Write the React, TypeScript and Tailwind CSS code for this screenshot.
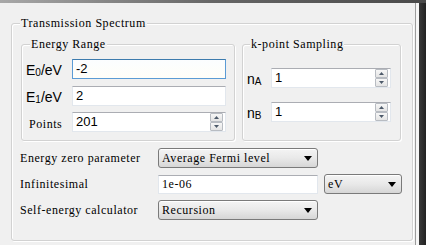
import React from "react";

const mono = "font-['Liberation_Serif',serif] text-[12px] tracking-[0.55px] text-black";
const sans = "font-['Liberation_Sans',Arial,sans-serif] text-black";

function GroupBox({ title, titleLeft, className, children }: { title: string; titleLeft: string; className: string; children?: React.ReactNode }) {
  return (
    <div className={"relative rounded-[3px] border border-[#d2d2d2] shadow-[inset_1px_1px_0_#ffffff,1px_1px_0_#ffffff] " + className}>
      <span className={"absolute top-[-8px] bg-[#f0f0f0] px-[1px] leading-[14px] whitespace-nowrap " + mono + " " + titleLeft}>{title}</span>
      {children}
    </div>
  );
}

function Tri({ up, color = "#4d5a6a" }: { up?: boolean; color?: string }) {
  return (
    <svg width="5" height="3" viewBox="0 0 5 3" className="block">
      {up ? <path d="M0 3 L2.5 0 L5 3 Z" fill={color} /> : <path d="M0 0 L5 0 L2.5 3 Z" fill={color} />}
    </svg>
  );
}

function Spinner() {
  return (
    <div className="flex flex-col w-[13px] h-[18px] mr-[2px]">
      <div className="flex-1 flex items-center justify-center border border-[#b8bcc2] rounded-[1px] bg-gradient-to-b from-[#f7f7f7] to-[#e4e4e4]">
        <Tri up />
      </div>
      <div className="flex-1 flex items-center justify-center border border-[#b8bcc2] rounded-[1px] bg-gradient-to-b from-[#f7f7f7] to-[#e4e4e4]">
        <Tri />
      </div>
    </div>
  );
}

function TextBox({ value, w, focused, spin, monoText, h = "h-[20px]" }: { value: string; w: string; focused?: boolean; spin?: boolean; monoText?: boolean; h?: string }) {
  const border = focused
    ? "border border-[#5b9bd5] border-t-[#3d7bad]"
    : "border border-[#e2e7ed] border-t-[#abadb3]";
  return (
    <div className={"flex items-center bg-white " + border + " " + w + " " + h + (focused ? " bg-gradient-to-b from-[#fbfdff] to-[#fffef8]" : "")}>
      <span className={"flex-1 pl-[3px] leading-[14px] " + (monoText ? mono : sans + " text-[13px]")}>{value}</span>
      {spin && <Spinner />}
    </div>
  );
}

function Combo({ value, w }: { value: string; w: string }) {
  return (
    <div className={"flex items-center h-[20px] rounded-[3px] border border-[#7a7a7a] bg-gradient-to-b from-[#f4f4f4] via-[#e9e9e9] to-[#d6d6d6] shadow-[inset_0_1px_0_#ffffff] " + w}>
      <span className={"flex-1 pl-[3px] leading-[14px] whitespace-nowrap " + mono}>{value}</span>
      <svg width="8" height="5" viewBox="0 0 8 5" className="mr-[5px]">
        <path d="M0 0 L8 0 L4 5 Z" fill="#000" />
      </svg>
    </div>
  );
}

function SubLabel({ main, sub, rest }: { main: string; sub: string; rest?: string }) {
  return (
    <span className={sans + " text-[14px] leading-[16px] whitespace-nowrap"}>
      {main}
      <sub className="text-[10px] relative top-[1px] align-baseline">{sub}</sub>
      {rest}
    </span>
  );
}

export default function App() {
  return (
    <div className="w-[426px] h-[245px] bg-[#f0f0f0] flex flex-col overflow-hidden">
      <div className="h-[3px] bg-gradient-to-r from-[#a8a8a8] via-[#666666] to-[#4a4a4a]" />
      <div className="flex flex-1">
        <div className="w-[415px]">
          <GroupBox title="Transmission Spectrum" titleLeft="left-[8px]" className="ml-[11px] mt-[20px] w-[402px] h-[218px]">
            <div className="flex mt-[20px] ml-[9px] gap-[7px]">
              <GroupBox title="Energy Range" titleLeft="left-[8px]" className="w-[214px] h-[97px]">
                <div className="flex flex-col pl-[4px]">
                  <div className="flex items-center h-[20px] mt-[14px]">
                    <div className="w-[46px]"><SubLabel main="E" sub="0" rest="/eV" /></div>
                    <TextBox value="-2" w="w-[154px]" focused />
                  </div>
                  <div className="flex items-center h-[20px] mt-[7px]">
                    <div className="w-[46px]"><SubLabel main="E" sub="1" rest="/eV" /></div>
                    <TextBox value="2" w="w-[154px]" />
                  </div>
                  <div className="flex items-center h-[20px] mt-[6px]">
                    <div className="w-[46px]"><span className={mono + " leading-[14px] pl-[3px]"}>Points</span></div>
                    <TextBox value="201" w="w-[154px]" spin />
                  </div>
                </div>
              </GroupBox>
              <GroupBox title="k-point Sampling" titleLeft="left-[7px]" className="w-[159px] h-[97px]">
                <div className="flex flex-col pl-[4px]">
                  <div className="flex items-center h-[20px] mt-[23px]">
                    <div className="w-[24px]"><SubLabel main="n" sub="A" /></div>
                    <TextBox value="1" w="w-[120px]" spin />
                  </div>
                  <div className="flex items-center h-[20px] mt-[14px]">
                    <div className="w-[24px]"><SubLabel main="n" sub="B" /></div>
                    <TextBox value="1" w="w-[120px]" spin />
                  </div>
                </div>
              </GroupBox>
            </div>
            <div className="flex flex-col ml-[8px] mt-[7px] gap-[6px]">
              <div className="flex items-center h-[20px]">
                <span className={"w-[138px] leading-[14px] whitespace-nowrap " + mono}>Energy zero parameter</span>
                <Combo value="Average Fermi level" w="w-[160px]" />
              </div>
              <div className="flex items-center h-[20px]">
                <span className={"w-[138px] leading-[14px] whitespace-nowrap " + mono}>Infinitesimal</span>
                <TextBox value="1e-06" w="w-[160px]" h="h-[19px]" monoText />
                <div className="ml-[6px]"><Combo value="eV" w="w-[78px]" /></div>
              </div>
              <div className="flex items-center h-[20px]">
                <span className={"w-[138px] leading-[14px] whitespace-nowrap " + mono}>Self-energy calculator</span>
                <Combo value="Recursion" w="w-[160px]" />
              </div>
            </div>
          </GroupBox>
        </div>
        <div className="w-[1px] bg-[#9c9c9c]" />
        <div className="w-[3px] bg-[#f6f6f6]" />
        <div className="flex-1 bg-gradient-to-r from-[#3a3a3a] to-[#222222]" />
      </div>
    </div>
  );
}
